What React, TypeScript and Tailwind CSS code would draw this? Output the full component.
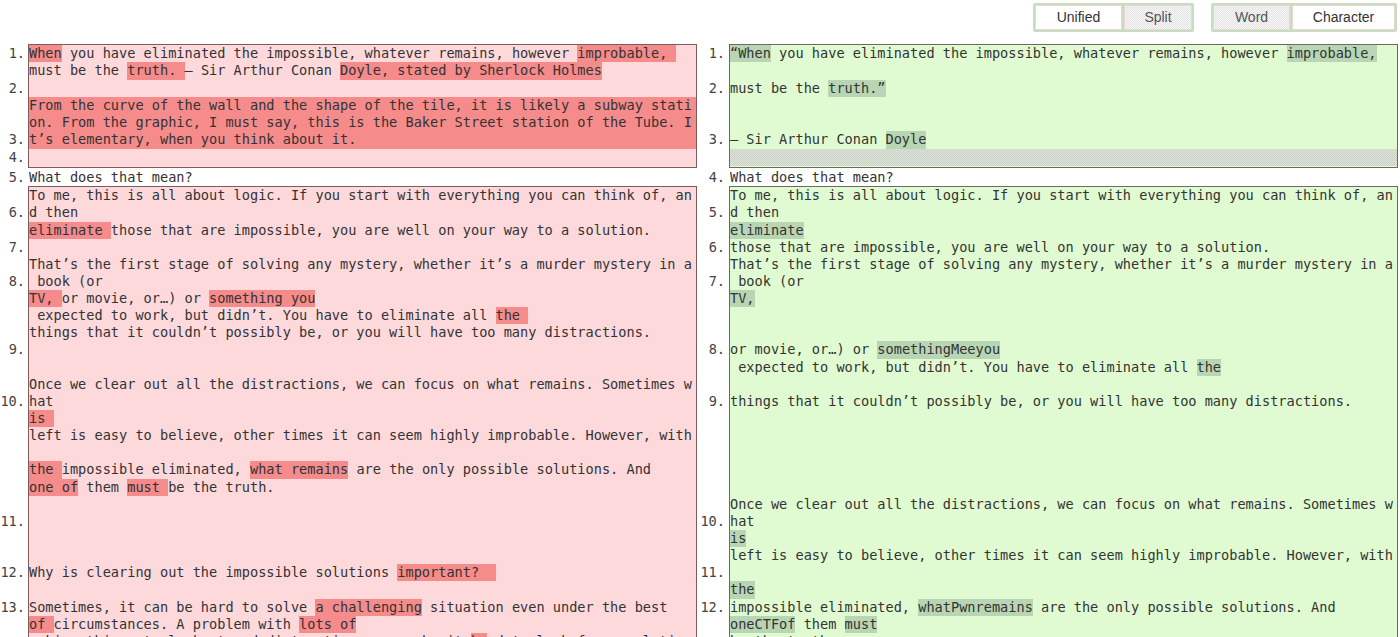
type Row = { n?: string; t: string; full?: boolean; band?: boolean };

const MONO = "font-['DejaVu_Sans_Mono',monospace] text-[13.6px]";
const BAND =
    "bg-[image:repeating-conic-gradient(#c6cfc1_0%_25%,#e0e7dc_0%_50%)] bg-[length:2px_2px]";

// text in {braces} is a changed word
const leftTop: Row[] = [
    { n: "1.", t: "{When} you have eliminated the impossible, whatever remains, however {improbable, }" },
    { t: "must be the {truth. }– Sir Arthur Conan {Doyle, stated by Sherlock Holmes}" },
    { n: "2.", t: "" },
    { t: "From the curve of the wall and the shape of the tile, it is likely a subway stati", full: true },
    { t: "on. From the graphic, I must say, this is the Baker Street station of the Tube. I", full: true },
    { n: "3.", t: "t’s elementary, when you think about it.", full: true },
    { n: "4.", t: "" },
];

const rightTop: Row[] = [
    { n: "1.", t: "{“When} you have eliminated the impossible, whatever remains, however {improbable,}" },
    { t: "" },
    { n: "2.", t: "must be the {truth.”}" },
    { t: "" },
    { t: "" },
    { n: "3.", t: "– Sir Arthur Conan {Doyle}" },
    { t: "", band: true },
];

const leftBottom: Row[] = [
    { t: "To me, this is all about logic. If you start with everything you can think of, an" },
    { n: "6.", t: "d then" },
    { t: "{eliminate }those that are impossible, you are well on your way to a solution." },
    { n: "7.", t: "" },
    { t: "That’s the first stage of solving any mystery, whether it’s a murder mystery in a" },
    { n: "8.", t: " book (or" },
    { t: "{TV, }or movie, or…) or {something you}" },
    { t: " expected to work, but didn’t. You have to eliminate all {the }" },
    { t: "things that it couldn’t possibly be, or you will have too many distractions." },
    { n: "9.", t: "" },
    { t: "" },
    { t: "Once we clear out all the distractions, we can focus on what remains. Sometimes w" },
    { n: "10.", t: "hat" },
    { t: "{is }" },
    { t: "left is easy to believe, other times it can seem highly improbable. However, with" },
    { t: "" },
    { t: "{the }impossible eliminated, {what remains} are the only possible solutions. And" },
    { t: "{one of} them {must }be the truth." },
    { t: "" },
    { n: "11.", t: "" },
    { t: "" },
    { t: "" },
    { n: "12.", t: "Why is clearing out the impossible solutions {important?  }" },
    { t: "" },
    { n: "13.", t: "Sometimes, it can be hard to solve {a challenging} situation even under the best" },
    { t: "{of }circumstances. A problem with {lots of}" },
    { t: "making things to look at and distractions can make it {ha}rd to look for a solution" },
];

const rightBottom: Row[] = [
    { t: "To me, this is all about logic. If you start with everything you can think of, an" },
    { n: "5.", t: "d then" },
    { t: "{eliminate}" },
    { n: "6.", t: "those that are impossible, you are well on your way to a solution." },
    { t: "That’s the first stage of solving any mystery, whether it’s a murder mystery in a" },
    { n: "7.", t: " book (or" },
    { t: "{TV,}" },
    { t: "" },
    { t: "" },
    { n: "8.", t: "or movie, or…) or {somethingMeeyou}" },
    { t: " expected to work, but didn’t. You have to eliminate all {the}" },
    { t: "" },
    { n: "9.", t: "things that it couldn’t possibly be, or you will have too many distractions." },
    { t: "" },
    { t: "" },
    { t: "" },
    { t: "" },
    { t: "" },
    { t: "Once we clear out all the distractions, we can focus on what remains. Sometimes w" },
    { n: "10.", t: "hat" },
    { t: "{is}" },
    { t: "left is easy to believe, other times it can seem highly improbable. However, with" },
    { n: "11.", t: "" },
    { t: "{the}" },
    { n: "12.", t: "impossible eliminated, {whatPwnremains} are the only possible solutions. And" },
    { t: "{oneCTFof} them {must}" },
    { t: "be the truth." },
];

const Line = ({ row, hl, h }: { row: Row; hl: string; h: string }) => {
    const parts = row.t.split(/(\{[^}]*\})/).filter(Boolean);
    return (
        <div className={`${h} whitespace-pre overflow-hidden ${row.full ? hl : ""} ${row.band ? BAND : ""}`}>
            {parts.map((p, i) =>
                p.startsWith("{") ? (
                    <span key={i} className={`inline-block align-top ${h} ${hl}`}>
                        {p.slice(1, -1)}
                    </span>
                ) : (
                    <span key={i}>{p}</span>
                )
            )}
        </div>
    );
};

interface BlockProps {
    rows: Row[];
    side: "l" | "r";
    box?: string;
    hl?: string;
    tall?: boolean;
}

const Block = ({ rows, side, box, hl = "", tall }: BlockProps) => {
    const h = tall ? "h-[17.3px] leading-[17.3px]" : "h-[17.15px] leading-[17.15px]";
    return (
        <div className="flex">
            <div
                className={`${side === "l" ? "w-[28px] pr-[3px]" : "w-[29px] pr-[4px]"} shrink-0 text-right text-[#444] ${box ? "pt-[1px]" : "pt-[1px]"}`}
            >
                {rows.map((r, i) => (
                    <div key={i} className={`${h} whitespace-pre`}>
                        {r.n}
                    </div>
                ))}
            </div>
            <div
                className={`w-[669px] shrink-0 ${box ? `border pb-[1px] ${box}` : "pl-[1px] pt-[1px]"}`}
            >
                {rows.map((r, i) => (
                    <Line key={i} row={r} hl={hl} h={h} />
                ))}
            </div>
        </div>
    );
};

const ToggleGroup = ({ items }: { items: { label: string; w: string; on?: boolean }[] }) => (
    <div className="flex h-[29px] border-2 border-[#c5debf] rounded-[2px]">
        {items.map((it, i) => (
            <div
                key={it.label}
                className={`${it.w} flex items-center justify-center shadow-[inset_0_0_0_1px_#f1d3d3] ${i > 0 ? "border-l-2 border-[#c5debf]" : ""} ${it.on ? "bg-[image:repeating-conic-gradient(#e3e3e3_0%_25%,#f7f7f7_0%_50%)] bg-[length:2px_2px] text-[#555]" : "bg-white text-[#333]"}`}
            >
                {it.label}
            </div>
        ))}
    </div>
);

export default function App() {
    return (
        <div className="h-screen overflow-hidden bg-white text-[#333]">
            <div className="h-[44px] flex justify-end items-start pt-[3px] pr-[3px] gap-[17px] font-['Liberation_Sans',Arial,sans-serif] text-[14px]">
                <ToggleGroup
                    items={[
                        { label: "Unified", w: "w-[87px]" },
                        { label: "Split", w: "w-[70px]", on: true },
                    ]}
                />
                <ToggleGroup
                    items={[
                        { label: "Word", w: "w-[77px]", on: true },
                        { label: "Character", w: "w-[105px]" },
                    ]}
                />
            </div>
            <div className={`flex ${MONO}`}>
                <div className="w-[697px]">
                    <Block rows={leftTop} side="l" tall box="border-[#7f5b5b] bg-[#fdd9dc]" hl="bg-[#f58b8b]" />
                    <Block rows={[{ n: "5.", t: "What does that mean?" }]} side="l" />
                    <Block rows={leftBottom} side="l" box="border-[#7f5b5b] bg-[#fdd9dc]" hl="bg-[#f58b8b]" />
                </div>
                <div className="w-[698px] ml-[3px]">
                    <Block rows={rightTop} side="r" tall box="border-[#6e6a62] bg-[#e0fbd2]" hl="bg-[#b9d6b4]" />
                    <Block rows={[{ n: "4.", t: "What does that mean?" }]} side="r" />
                    <Block rows={rightBottom} side="r" box="border-[#6e6a62] bg-[#e0fbd2]" hl="bg-[#b9d6b4]" />
                </div>
            </div>
        </div>
    );
}
